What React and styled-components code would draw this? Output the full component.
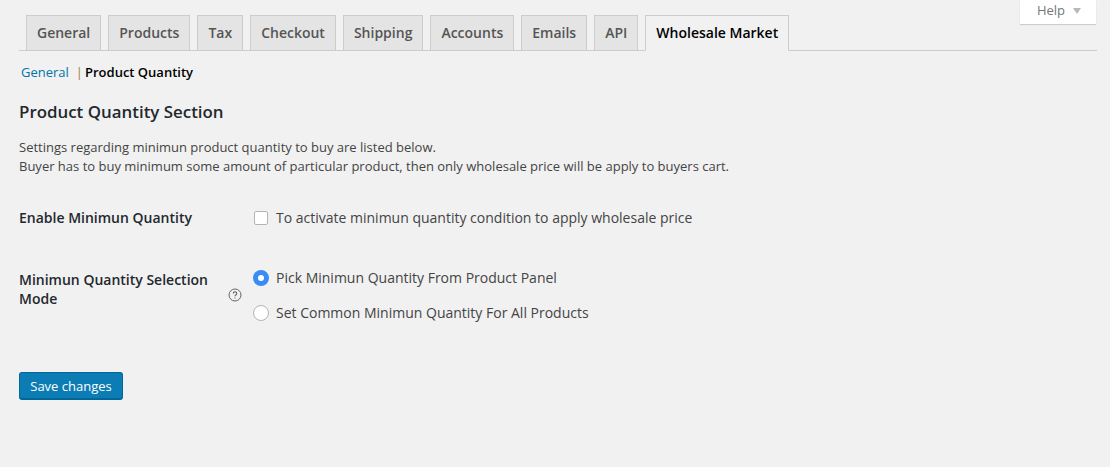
import styled, { createGlobalStyle } from "styled-components";

const Global = createGlobalStyle`
  html, body {
    margin: 0;
    padding: 0;
    background: #f1f1f1;
  }
  body {
    color: #444;
    font-family: "Open Sans", sans-serif;
    font-size: 13px;
    line-height: 1.4em;
  }
`;

const Page = styled.div`
  position: relative;
  width: 1110px;
  height: 467px;
  overflow: hidden;
  padding: 15px 13px 0 19px;
  box-sizing: border-box;
`;

const HelpTab = styled.button`
  position: absolute;
  top: 0;
  right: 14px;
  width: 76px;
  height: 24px;
  padding: 0 0 5px 2px;
  border: 0;
  background: #fff;
  box-shadow: 0 1px 1px rgba(0, 0, 0, 0.15);
  color: #72777c;
  font: 13px "Open Sans", sans-serif;
  display: flex;
  align-items: center;
  justify-content: center;
  gap: 8px;
`;

const Caret = styled.span`
  width: 0;
  height: 0;
  margin-top: 2px;
  border-left: 4px solid transparent;
  border-right: 4px solid transparent;
  border-top: 6px solid #b4b9be;
`;

const TabBar = styled.nav`
  display: flex;
  gap: 7px;
  padding-left: 7px;
  height: 35px;
  border-bottom: 1px solid #ccc;
`;

const Tab = styled.a`
  box-sizing: border-box;
  height: 36px;
  padding: 5px 10px;
  border: 1px solid #ccc;
  border-bottom-color: ${(p) => (p.$active ? "#f1f1f1" : "#ccc")};
  background: ${(p) => (p.$active ? "#f1f1f1" : "#e4e4e4")};
  color: ${(p) => (p.$active ? "#000" : "#555")};
  font-size: 14px;
  font-weight: 600;
  line-height: 24px;
  white-space: nowrap;
`;

const Crumbs = styled.div`
  display: flex;
  align-items: center;
  margin: 12px 0 0 2px;
  height: 18px;
  line-height: 18px;
`;

const CrumbLink = styled.a`
  color: #0073aa;
`;

const CrumbSep = styled.span`
  margin: 0 2px 0 7px;
  color: #a87b3f;
`;

const CrumbCurrent = styled.strong`
  color: #000;
  font-weight: 600;
`;

const Title = styled.h2`
  margin: 20px 0 0;
  color: #23282d;
  font-size: 16.9px;
  font-weight: 600;
  line-height: 22px;
`;

const Intro = styled.p`
  margin: 15px 0 0;
  font-size: 13px;
  line-height: 19px;
  color: #444;
`;

const SettingRow = styled.div`
  display: grid;
  grid-template-columns: 235px 1fr;
  margin-top: ${(p) => p.$top}px;
`;

const Label = styled.div`
  display: flex;
  justify-content: space-between;
  align-items: center;
  padding-right: 12px;
  color: #23282d;
  font-size: 14px;
  font-weight: 600;
  line-height: 19px;
`;

const LabelText = styled.span`
  width: 205px;
  margin-bottom: ${(p) => p.$lift || 0}px;
`;

const Choices = styled.div`
  display: flex;
  flex-direction: column;
  gap: 16px;
`;

const Choice = styled.label`
  display: flex;
  align-items: center;
  gap: ${(p) => p.$gap}px;
  height: 19px;
  color: #444;
  font-size: 14px;
  line-height: 19px;
  white-space: nowrap;
`;

const Check = styled.span`
  box-sizing: border-box;
  width: 14px;
  height: 14px;
  border: 1px solid #b4b4b4;
  border-radius: 2px;
  background: #fff;
`;

const Radio = styled.span`
  box-sizing: border-box;
  display: flex;
  align-items: center;
  justify-content: center;
  width: 16px;
  height: 16px;
  margin-left: -1px;
  border: ${(p) => (p.$on ? "0" : "1px solid #b4b4b4")};
  border-radius: 50%;
  background: ${(p) => (p.$on ? "#3b8bf5" : "#fff")};

  &::after {
    content: "";
    display: ${(p) => (p.$on ? "block" : "none")};
    width: 6px;
    height: 6px;
    border-radius: 50%;
    background: #fff;
  }
`;

const SaveButton = styled.button`
  display: block;
  box-sizing: border-box;
  width: 104px;
  height: 28px;
  margin-top: 50px;
  padding: 0;
  border: 1px solid #006799;
  border-bottom-width: 2px;
  border-radius: 3px;
  background: #0c7cb5;
  color: #fff;
  font: 13px "Open Sans", sans-serif;
`;

const tabs = ["General", "Products", "Tax", "Checkout", "Shipping", "Accounts", "Emails", "API"];

const HelpIcon = () => (
  <svg width="14" height="14" viewBox="0 0 14 14" fill="none" stroke="#666" strokeWidth="1">
    <circle cx="7" cy="7" r="6" />
    <path d="M5.2 5.6c0-1 .8-1.7 1.8-1.7s1.8.7 1.8 1.6c0 1.3-1.8 1.3-1.8 2.8" strokeWidth="1.1" />
    <path d="M7 9.4v1.2" strokeWidth="1.1" />
  </svg>
);

export default function App() {
  return (
    <Page>
      <Global />
      <HelpTab>
        Help <Caret />
      </HelpTab>
      <TabBar>
        {tabs.map((t) => (
          <Tab key={t}>{t}</Tab>
        ))}
        <Tab $active>Wholesale Market</Tab>
      </TabBar>
      <Crumbs>
        <CrumbLink>General</CrumbLink>
        <CrumbSep>|</CrumbSep>
        <CrumbCurrent>Product Quantity</CrumbCurrent>
      </Crumbs>
      <Title>Product Quantity Section</Title>
      <Intro>
        Settings regarding minimun product quantity to buy are listed below.
        <br />
        Buyer has to buy minimum some amount of particular product, then only wholesale price will be apply to buyers cart.
      </Intro>
      <SettingRow $top={32}>
        <Label>
          <LabelText>Enable Minimun Quantity</LabelText>
        </Label>
        <Choices>
          <Choice $gap={8}>
            <Check />
            To activate minimun quantity condition to apply wholesale price
          </Choice>
        </Choices>
      </SettingRow>
      <SettingRow $top={41}>
        <Label>
          <LabelText $lift={12}>Minimun Quantity Selection Mode</LabelText>
          <HelpIcon />
        </Label>
        <Choices>
          <Choice $gap={7}>
            <Radio $on />
            Pick Minimun Quantity From Product Panel
          </Choice>
          <Choice $gap={7}>
            <Radio />
            Set Common Minimun Quantity For All Products
          </Choice>
        </Choices>
      </SettingRow>
      <SaveButton>Save changes</SaveButton>
    </Page>
  );
}
